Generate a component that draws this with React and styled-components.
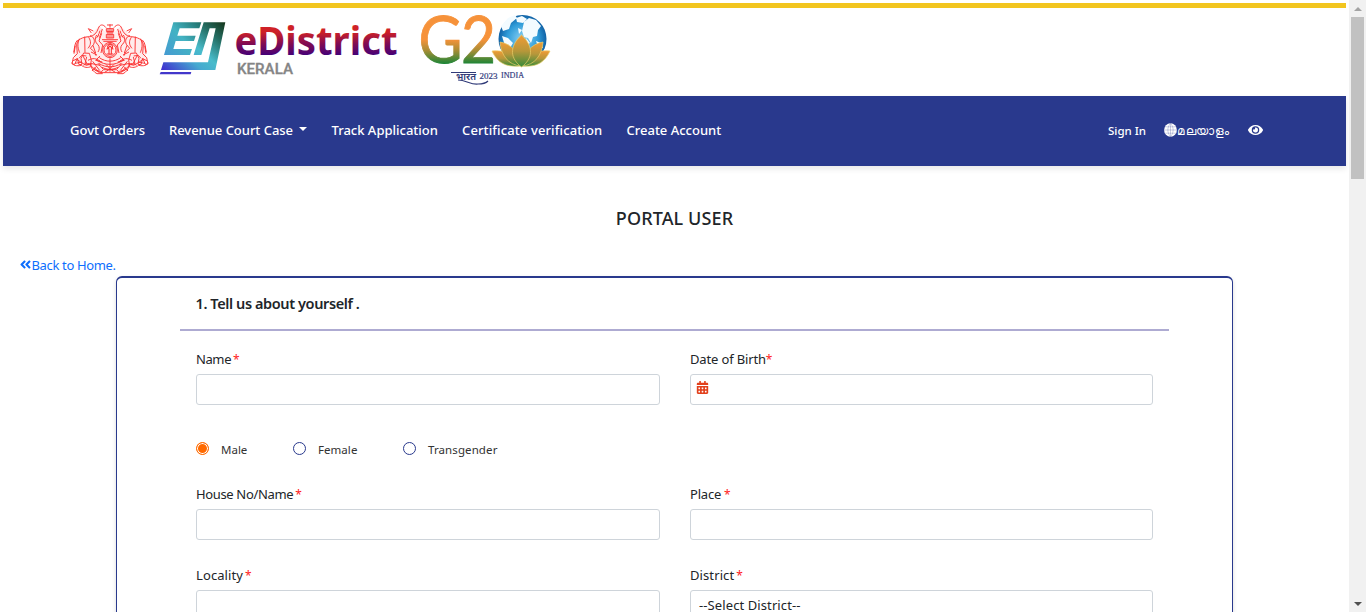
import React from "react";
import styled, { createGlobalStyle } from "styled-components";
import { FaEye, FaAngleDoubleLeft, FaCalendarAlt } from "react-icons/fa";

const Global = createGlobalStyle`
  * { box-sizing: border-box; }
  html, body { margin: 0; overflow: hidden; background: #fff; }
  body { font-family: "Noto Sans", "Open Sans", sans-serif; font-size: 13px; color: #212529; }
`;

const Window = styled.div`
  display: flex;
  height: 612px;
  overflow: hidden;
`;

const Page = styled.div`
  flex: 1;
  padding: 3px 3px 0;
  overflow: hidden;
`;

const Track = styled.aside`
  width: 17px;
  background: #f1f1f1;
  display: flex;
  flex-direction: column;
  align-items: center;
  justify-content: space-between;
`;

const TrackTop = styled.div`
  display: flex;
  flex-direction: column;
  align-items: center;
`;

const ArrowBox = styled.div`
  height: 17px;
  display: flex;
  align-items: center;
`;

const Arrow = styled.i`
  border: 4px solid transparent;
  border-width: ${(p) => (p.$up ? "0 4px 4px" : "4px 4px 0")};
  border-${(p) => (p.$up ? "bottom" : "top")}-color: ${(p) => (p.$up ? "#a3a3a3" : "#505050")};
`;

const Thumb = styled.div`
  width: 13px;
  height: 162px;
  background: #c1c1c1;
`;

const Header = styled.header`
  height: 93px;
  border-top: 5px solid #f2c51f;
  padding-left: 57px;
`;

const Nav = styled.nav`
  height: 70px;
  padding: 0 83px 2px 67px;
  display: flex;
  align-items: center;
  justify-content: space-between;
  background: #29398d;
  color: #fff;
  box-shadow: 0 3px 6px rgba(0, 0, 0, 0.09);
`;

const NavGroup = styled.div`
  display: flex;
  align-items: center;
  gap: ${(p) => p.$gap}px;
`;

const NavLink = styled.a`
  width: ${(p) => p.$w}px;
  font-size: ${(p) => p.$size || 13}px;
  font-weight: 500;
  letter-spacing: ${(p) => p.$track || 0}px;
  white-space: nowrap;
  display: flex;
  align-items: center;
`;

const Caret = styled.i`
  margin: -3px 1px 0 auto;
  border: 4px solid transparent;
  border-top-color: #fff;
  border-bottom: 0;
`;

const Title = styled.h1`
  margin: 40px 0 0;
  font-size: 18px;
  line-height: 24px;
  font-weight: 500;
  letter-spacing: ${(p) => p.$track}px;
  text-align: center;
`;

const BackLink = styled.a`
  display: flex;
  align-items: center;
  margin: 25px 0 0 15.5px;
  height: 21px;
  padding-bottom: 2px;
  font-size: 13px;
  font-weight: 400;
  color: #0d6efd;
  letter-spacing: ${(p) => p.$track}px;
`;

const Card = styled.main`
  margin: 0 113px;
  height: 420px;
  border: 1px solid #29398d;
  border-top-width: 2px;
  border-radius: 6px;
  padding: 0 63px;
  box-shadow: 0 2px 4px rgba(0, 0, 0, 0.15);
`;

const SectionHead = styled.h2`
  margin: 0;
  height: 53px;
  border-bottom: 2px solid #aeabd2;
  padding: 14px 15px 0 15.5px;
  font-size: 14.5px;
  line-height: 22px;
  font-weight: 600;
  letter-spacing: ${(p) => p.$track}px;
`;

const Row = styled.div`
  display: grid;
  grid-template-columns: 464px 463px;
  column-gap: 30px;
  margin: ${(p) => p.$top}px 16px 0;
`;

const Label = styled.label`
  display: block;
  height: 26px;
  line-height: 22px;
  font-size: 13px;
  font-weight: 400;
  white-space: nowrap;
  letter-spacing: ${(p) => p.$track || 0}px;
`;

const Star = styled.span`
  color: #f22;
  font-size: 12px;
  line-height: 1;
  letter-spacing: 0;
  margin-left: ${(p) => p.$gap}px;
`;

const Control = styled.div`
  height: 31px;
  border: 1px solid #ced4da;
  border-radius: 3px;
  padding: 0 5px 5px;
  display: flex;
  align-items: center;
  color: #e2401c;
`;

const Selected = styled.span`
  color: #212529;
  font-size: 13px;
  line-height: 18px;
  padding: 4px 0 0 3px;
  letter-spacing: 0.1px;
`;

const Radios = styled.div`
  display: flex;
  margin: 35px 16px 0;
  height: 18px;
`;

const Option = styled.label`
  display: flex;
  align-items: center;
  width: ${(p) => p.$w}px;
  font-size: 11.5px;
  font-weight: 400;
  color: #333;
  letter-spacing: ${(p) => p.$track}px;
`;

const Dot = styled.span`
  width: 13px;
  height: 13px;
  border-radius: 50%;
  margin: 0 12px 2px 0;
  border: 1px solid ${(p) => (p.$on ? "#ff6a00" : "#29398d")};
  background: ${(p) => (p.$on ? "#ff6a00" : "#fff")};
  box-shadow: ${(p) => (p.$on ? "inset 0 0 0 1px #fff" : "none")};
`;

const ElephantSide = () => (
  <g>
    <path d="M138 83c-9-12-19-10-23 2-5 14-12 22-26 25-22 1-38 8-39 25l2 26-12 12-4 19 8 1 8-18 5 19 9-1-3-18 8-16 17 1 6 20-3 18" />
    <path d="M53 120c-10 8-9 26-12 37M46 137l-4 24M58 116c-8 19-3 31 1 42M74 110l1 48M86 112c8 12 7 23-2 33M90 107c12 3 16 15 11 26l-10 12c8 7 14 10 17 22M110 105c-7 11-4 24 4 29 5 7 5 15 0 22M120 92c-4 13-8 20-12 23M127 87l-6 19M99 136l8 23M93 156l18 9M45 190l18-3 16 9 17-5 24 5" />
    <path d="M100 93l-15-7 9 13M113 109c6-5 10 3 4 6M69 168l11 21M80 171l-5 20 13 3M57 175l8-9 14 2M38 183l12-6 13 10M125 100l-8 23 11 12-5 24" />
    <path d="M84 181c15-8 24-6 36 2M91 192c7 16 18 22 36 27M98 184l20 26M108 200l-12 13M114 190l15 17M104 210l18 4M120 168l-13 13 20 5" />
    <path d="M36 187c2 10 14 12 28 9 8 6 19 9 30 3 2 10 7 17 17 22h17M70 196c8-6 16-6 26-4M101 203c6 2 12 8 16 15" />
  </g>
);

const Emblem = () => (
  <g transform="translate(0 -8) scale(.33333)" fill="none" stroke="#fb3030" strokeWidth="2.8">
    <path d="M40 180l12-60 38-14 28-28 22 20h20l22-20 28 28 38 14 12 60-40 14-34 25h-72l-34-25z" fill="#fb3030" fillOpacity=".09" stroke="none" />
    <ElephantSide />
    <g transform="translate(300 0) scale(-1 1)"><ElephantSide /></g>
    <path d="M150 73v10M141 75h18M139 86h22v8h-22zM139 103h22v11h-22zM139 96h22M144 86v28M150 84v30M156 86v28M126 119h48M130 124h40" />
    <ellipse cx="150" cy="150" rx="22" ry="23" />
    <ellipse cx="150" cy="150" rx="18" ry="19" />
    <path d="M150 132c-8 4-10 11-3 15v16h7v-16c7-6 4-12-4-15zM140 148l10-10 10 10M140 162h20" strokeWidth="3.2" />
    <path d="M118 173c20 14 44 14 64 0M111 181c24 16 54 16 78 0M116 190c22 14 46 14 68 0M126 202c16 8 32 8 48 0M130 209h40l8 9h-56zM134 217l16-10 16 10M138 193l12 13 12-13M150 175v40" />
  </g>
);

const Globe = () => (
  <svg width="13" height="14" viewBox="0 0 13 14">
    <ellipse cx="6.5" cy="7" rx="6.4" ry="6.7" fill="#fff" />
    <path d="M6.500 .5v13M.2 7h12.600M1.200 3.800h10.600M1.200 10.200h10.600M6.500 .5C3 3.500 3 10.500 6.500 13.500M6.500 .5c3.500 3 3.500 10 0 13" fill="none" stroke="#29398d" strokeOpacity=".45" strokeWidth=".55" />
  </svg>
);

const Logos = () => (
  <svg width="500" height="86" viewBox="0 0 500 86">
    <defs>
      <linearGradient id="mark" gradientUnits="userSpaceOnUse" x1="490" y1="67" x2="340" y2="235">
        <stop offset="0" stopColor="#163a20" />
        <stop offset=".22" stopColor="#257066" />
        <stop offset=".48" stopColor="#48bccb" />
        <stop offset=".66" stopColor="#45a9d0" />
        <stop offset="1" stopColor="#4034cf" />
      </linearGradient>
      <linearGradient id="e" gradientUnits="userSpaceOnUse" x1="425" y1="67" x2="312" y2="165">
        <stop offset="0" stopColor="#1f6f68" />
        <stop offset=".5" stopColor="#43b3c3" />
        <stop offset="1" stopColor="#459ad2" />
      </linearGradient>
      <linearGradient id="word" gradientUnits="userSpaceOnUse" x1="0" y1="18" x2="0" y2="48">
        <stop offset=".2" stopColor="#cf2127" />
        <stop offset=".6" stopColor="#7f0b53" />
        <stop offset="1" stopColor="#40007b" />
      </linearGradient>
      <linearGradient id="g20" gradientUnits="userSpaceOnUse" x1="0" y1="7" x2="0" y2="56">
        <stop offset=".5" stopColor="#f6923a" />
        <stop offset=".72" stopColor="#a98d35" />
        <stop offset="1" stopColor="#198537" />
      </linearGradient>
      <linearGradient id="petal" x1="0" y1="0" x2="0" y2="1">
        <stop offset="0" stopColor="#f29a35" />
        <stop offset=".5" stopColor="#b7973a" />
        <stop offset="1" stopColor="#358b3a" />
      </linearGradient>
      <radialGradient id="sky">
        <stop offset="0" stopColor="#8fd4f5" />
        <stop offset=".65" stopColor="#2e9bd8" />
        <stop offset="1" stopColor="#1162a6" />
      </radialGradient>
    </defs>
    <Emblem />
    <g transform="translate(0 -8) scale(.33333)">
      <path fill="url(#e)" d="M340 67h84l-6 18h-59l-7 22h55l-5 16h-55l-7 24h56l-6 18h-78z" />
      <path fill="url(#mark)" d="M431 67h65l-30 143H303l7-23h134l23-102h-18l-25 80h-23z" />
      <path fill="#4338cb" d="M302 216h92l-2 7h-93z" />
    </g>
    <text x="174.500" y="47" fontFamily="Noto Sans" fontWeight="700" fontSize="38.500" textLength="163" lengthAdjust="spacingAndGlyphs" fill="url(#word)">eDistrict</text>
    <text x="177" y="65.500" fontFamily="Roboto" fontWeight="500" fontSize="14.500" textLength="56" lengthAdjust="spacingAndGlyphs" fill="#858585" stroke="#858585" strokeWidth=".3">KERALA</text>
    <text x="358.500" y="54.500" fontFamily="Lato" fontWeight="400" fontSize="65" textLength="44" lengthAdjust="spacingAndGlyphs" fill="url(#g20)" stroke="url(#g20)" strokeWidth=".9">G</text>
    <text x="401" y="54.500" fontFamily="Lato" fontWeight="400" fontSize="65" textLength="35" lengthAdjust="spacingAndGlyphs" fill="url(#g20)" stroke="url(#g20)" strokeWidth=".9">2</text>
    <circle cx="462.500" cy="31" r="24" fill="url(#sky)" />
    <path fill="#f3fbff" d="M441 18l7-8 7-3 2 3-6 5-2 6-6 2zM456 10l6-2 5 3-4 4-6-1zM464 14l5-4 7 2 5 6-3 4-1 6-4 1-2 6-3-5-4-1-2-6zM442 28l6 2 5 5-3 5-5-2zM476 33l5 2 2 5-5-1zM466 30l4 5-3 2zM458 20l4 2-3 4z" />
    <g fill="url(#petal)" stroke="#edcf68" strokeWidth=".7">
      <path d="M432 43c12-1 20 2 28 15-13 1-22-2-28-15z" />
      <path d="M490 43c-12-1-20 2-28 15 13 1 22-2 28-15z" />
      <path d="M440 34c12 2 19 11 21 24-13-1-20-11-21-24z" />
      <path d="M483 34c-12 2-19 11-21 24 13-1 20-11 21-24z" />
      <path d="M461.500 27c-13 12-11 24 0 32 11-8 13-20 0-32z" />
    </g>
    <text x="396" y="71.500" fontFamily="Noto Sans Devanagari, Noto Sans" fontSize="10" fontWeight="600" textLength="20" lengthAdjust="spacingAndGlyphs" fill="#303a78">भारत</text>
    <path d="M391 64.500h25M398 72c8 0 13 5 20 4 5 0 8-1 10-3" fill="none" stroke="#303a78" strokeWidth="1.2" />
    <text x="419.500" y="71" fontFamily="Liberation Serif" fontSize="9" fontWeight="400" textLength="18" lengthAdjust="spacingAndGlyphs" fill="#34407e" stroke="#34407e" strokeWidth=".2">2023</text>
    <text x="441" y="70" fontFamily="Liberation Serif" fontSize="8.500" fontWeight="400" textLength="23" lengthAdjust="spacingAndGlyphs" fill="#34407e" stroke="#34407e" strokeWidth=".2">INDIA</text>
  </svg>
);

const Field = ({ label, track, gap = 3, children }) => (
  <div>
    <Label $track={track}>{label}<Star $gap={gap}>*</Star></Label>
    <Control>{children}</Control>
  </div>
);

export default function App() {
  return (
    <Window>
      <Global />
      <Page>
        <Header><Logos /></Header>
        <Nav>
          <NavGroup $gap={24}>
            <NavLink $w={75}>Govt Orders</NavLink>
            <NavLink $w={138.5} $track={-0.03}>Revenue Court Case<Caret /></NavLink>
            <NavLink $w={106.5}>Track Application</NavLink>
            <NavLink $w={140.5} $track={0.12}>Certificate verification</NavLink>
            <NavLink $w={95}>Create Account</NavLink>
          </NavGroup>
          <NavGroup $gap={18}>
            <NavLink $w={38} $size={11.5}>Sign In</NavLink>
            <NavLink $w={66} $size={11.5} $track={0.5}><Globe />മലയാളം</NavLink>
            <NavLink $w={15}><FaEye size={16} /></NavLink>
          </NavGroup>
        </Nav>
        <Title $track={0.12}>PORTAL USER</Title>
        <BackLink $track={-0.35}><FaAngleDoubleLeft size={13} />Back to Home.</BackLink>
        <Card>
          <SectionHead $track={-0.4}>1. Tell us about yourself .</SectionHead>
          <Row $top={17}>
            <Field label="Name" gap={2} track={-0.4} />
            <Field label="Date of Birth" gap={0} track={-0.15}><FaCalendarAlt size={13} /></Field>
          </Row>
          <Radios>
            <Option $w={97} $track={0}><Dot $on />Male</Option>
            <Option $w={110} $track={0.05}><Dot />Female</Option>
            <Option $w={110} $track={0.1}><Dot />Transgender</Option>
          </Radios>
          <Row $top={25}>
            <Field label="House No/Name" gap={2} track={-0.35} />
            <Field label="Place" track={-0.2} />
          </Row>
          <Row $top={24}>
            <Field label="Locality" track={0.1} gap={2} />
            <Field label="District" track={0.1} gap={2}><Selected>--Select District--</Selected></Field>
          </Row>
        </Card>
      </Page>
      <Track>
        <TrackTop>
          <ArrowBox><Arrow $up /></ArrowBox>
          <Thumb />
        </TrackTop>
        <ArrowBox><Arrow /></ArrowBox>
      </Track>
    </Window>
  );
}
